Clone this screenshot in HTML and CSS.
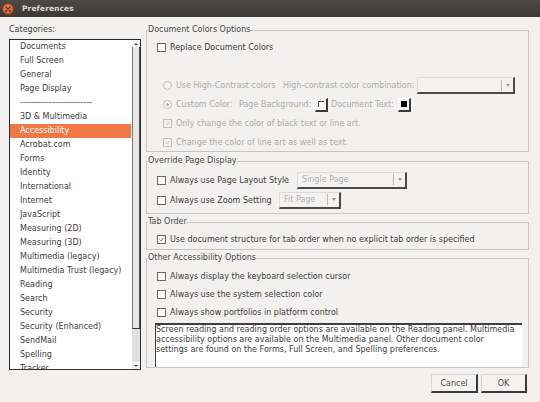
FILE: index.html
```html
<!DOCTYPE html>
<html>
<head>
<meta charset="utf-8">
<link rel="stylesheet" href="styles.css">
</head>
<body>
<div class="window">
  <div class="titlebar">
    <svg class="close" width="12" height="12" viewBox="0 0 12 12">
      <defs>
        <radialGradient id="cg" cx="0.45" cy="0.35" r="0.7">
          <stop offset="0" stop-color="#f7895a"/>
          <stop offset="1" stop-color="#d9481a"/>
        </radialGradient>
      </defs>
      <circle cx="6" cy="6" r="5.3" fill="url(#cg)" stroke="#b7421a" stroke-width="0.6"/>
      <path d="M4 4 L8 8 M8 4 L4 8" stroke="#3c3b37" stroke-width="1.4" stroke-linecap="round"/>
    </svg>
    <span class="title">Preferences</span>
  </div>

  <div class="main">
    <div class="cats">
      <div class="cats-label">Categories:</div>
      <div class="listbox">
        <ul class="items">
          <li>Documents</li>
          <li>Full Screen</li>
          <li>General</li>
          <li>Page Display</li>
          <li>-------------------------</li>
          <li>3D &amp; Multimedia</li>
          <li class="sel">Accessibility</li>
          <li>Acrobat.com</li>
          <li>Forms</li>
          <li>Identity</li>
          <li>International</li>
          <li>Internet</li>
          <li>JavaScript</li>
          <li>Measuring (2D)</li>
          <li>Measuring (3D)</li>
          <li>Multimedia (legacy)</li>
          <li>Multimedia Trust (legacy)</li>
          <li>Reading</li>
          <li>Search</li>
          <li>Security</li>
          <li>Security (Enhanced)</li>
          <li>SendMail</li>
          <li>Spelling</li>
          <li>Tracker</li>
        </ul>
        <div class="scrollbar">
          <div class="arrow"><span class="tri up"></span></div>
          <div class="thumb"></div>
          <div class="track"></div>
          <div class="arrow"><span class="tri down"></span></div>
        </div>
      </div>
    </div>

    <div class="panel">
      <fieldset class="group g1">
        <legend>Document Colors Options</legend>
        <div class="row h19">
          <span class="cb"></span><span>Replace Document Colors</span>
        </div>
        <div class="dis-block">
          <div class="row indent h19 dis">
            <span class="rb"></span><span class="w-hc">Use High-Contrast colors</span>
            <span class="w-hcc">High-contrast color combination:</span>
            <span class="combo w98"><span class="combo-text"></span><span class="sep"></span><span class="darr"></span></span>
          </div>
          <div class="row indent h19 dis">
            <span class="rb on"></span><span class="w-cc">Custom Color:</span>
            <span class="w-pb">Page Background:</span>
            <span class="swatch"><span class="chip white"></span></span>
            <span class="w-dt">Document Text:</span>
            <span class="swatch"><span class="chip black"></span></span>
          </div>
          <div class="row indent h19 dis">
            <span class="cb dis"><svg class="chk" viewBox="0 0 9 9"><path d="M2 4.5 L3.8 6.3 L7 2.5" fill="none" stroke="#b5b4b2" stroke-width="1"/></svg></span>
            <span>Only change the color of black text or line art.</span>
          </div>
          <div class="row indent h18 dis">
            <span class="cb dis"><svg class="chk" viewBox="0 0 9 9"><path d="M2 4.5 L3.8 6.3 L7 2.5" fill="none" stroke="#b5b4b2" stroke-width="1"/></svg></span>
            <span>Change the color of line art as well as text.</span>
          </div>
        </div>
      </fieldset>

      <fieldset class="group g2">
        <legend>Override Page Display</legend>
        <div class="row h20">
          <span class="cb"></span><span class="w-pls">Always use Page Layout Style</span>
          <span class="combo w110 dis"><span class="combo-text">Single Page</span><span class="sep"></span><span class="darr"></span></span>
        </div>
        <div class="row h20">
          <span class="cb"></span><span class="w-zs">Always use Zoom Setting</span>
          <span class="combo w62 dis"><span class="combo-text">Fit Page</span><span class="sep"></span><span class="darr"></span></span>
        </div>
      </fieldset>

      <fieldset class="group g3">
        <legend>Tab Order</legend>
        <div class="row h18">
          <span class="cb"><svg class="chk" viewBox="0 0 9 9"><path d="M2 4.5 L3.8 6.3 L7 2.5" fill="none" stroke="#555" stroke-width="1"/></svg></span>
          <span>Use document structure for tab order when no explicit tab order is specified</span>
        </div>
      </fieldset>

      <fieldset class="group g4">
        <legend>Other Accessibility Options</legend>
        <div class="row h18">
          <span class="cb"></span><span>Always display the keyboard selection cursor</span>
        </div>
        <div class="row h18">
          <span class="cb"></span><span>Always use the system selection color</span>
        </div>
        <div class="row h18">
          <span class="cb"></span><span>Always show portfolios in platform control</span>
        </div>
        <div class="note">Screen reading and reading order options are available on the Reading panel. Multimedia<br>accessibility options are available on the Multimedia panel. Other document color<br>settings are found on the Forms, Full Screen, and Spelling preferences.</div>
      </fieldset>
    </div>
  </div>

  <div class="buttons">
    <button class="btn cancel">Cancel</button>
    <button class="btn ok">OK</button>
  </div>
</div>
</body>
</html>
```

FILE: styles.css
```css
html, body {
  margin: 0;
  padding: 0;
}
body {
  background: #f2f1f0;
  font-family: "DejaVu Sans", "Liberation Sans", sans-serif;
  font-size: 8px;
  color: #3c3c3c;
}
.window {
  width: 540px;
  height: 402px;
  overflow: hidden;
  background: #f2f1f0;
}

/* title bar */
.titlebar {
  height: 17px;
  display: flex;
  align-items: center;
  padding-left: 2px;
  background: linear-gradient(#4a4944, #3a3935);
}
.close {
  display: block;
  flex: none;
}
.title {
  margin-left: 8px;
  font-weight: bold;
  font-size: 7.5px;
  color: #dfdbd2;
  letter-spacing: 0.1px;
}

/* main area */
.main {
  display: flex;
  gap: 5px;
  padding: 8px 11px 0 9px;
  height: 353px;
  box-sizing: border-box;
}
.cats {
  width: 132px;
  flex: none;
  display: flex;
  flex-direction: column;
}
.cats-label {
  height: 10px;
  line-height: 10px;
  margin-bottom: 4px;
}
.listbox {
  height: 331px;
  box-sizing: border-box;
  border: 1px solid #333;
  border-top-color: #2a2a2a;
  border-left-color: #2a2a2a;
  background: #fff;
  display: flex;
}
.items {
  flex: 1;
  list-style: none;
  margin: 0;
  padding: 0 1px 0 0;
  overflow: hidden;
}
.items li {
  height: 14px;
  line-height: 14px;
  padding-left: 10px;
  white-space: nowrap;
}
.items li.sel {
  background: #f07746;
  color: #fff;
}
.scrollbar {
  width: 8px;
  flex: none;
  display: flex;
  flex-direction: column;
  background: #f4f4f4;
}
.arrow {
  height: 7px;
  flex: none;
  display: flex;
  align-items: center;
  justify-content: center;
}
.tri {
  width: 0;
  height: 0;
  border-left: 2px solid transparent;
  border-right: 2px solid transparent;
}
.tri.up { border-bottom: 2px solid #444; }
.tri.down { border-top: 2px solid #444; }
.thumb {
  height: 282px;
  flex: none;
  box-sizing: border-box;
  background: #e8e7e5;
  border-left: 1px solid #7a7a7a;
  border-right: 1px solid #4a4a4a;
  border-bottom: 1px solid #333;
}
.track {
  flex: 1;
  background: #e2e1df;
}

/* right panel */
.panel {
  width: 383px;
  flex: none;
  display: flex;
  flex-direction: column;
}
.group {
  margin: 0;
  padding: 0;
  min-width: 0;
  border: 1px solid #c6c5c3;
}
.group legend {
  padding: 0;
  margin-left: 1px;
  height: 10px;
  line-height: 10px;
  color: #474747;
}
.g1 { padding-top: 3px; }
.g2 { margin-top: 4px; padding: 4px 0 3px; }
.g3 { margin-top: 3px; padding: 3px 0 1px; }
.g4 { margin-top: 3px; padding-top: 4px; }

.row {
  display: flex;
  align-items: center;
  padding-left: 10px;
  white-space: nowrap;
}
.row.indent { padding-left: 16px; }
.h18 { height: 18px; }
.h19 { height: 19px; }
.h20 { height: 20px; }
.dis-block { margin-top: 19px; }
.dis { color: #acaba9; }

.cb {
  width: 9px;
  height: 9px;
  flex: none;
  box-sizing: border-box;
  border: 1px solid #6a6a6a;
  background: #fbfbfb;
  margin-right: 4px;
  display: flex;
}
.cb.dis {
  border-color: #c2c1bf;
  background: #f4f3f2;
}
.chk {
  width: 7px;
  height: 7px;
  display: block;
}
.rb {
  width: 9px;
  height: 9px;
  flex: none;
  box-sizing: border-box;
  border: 1px solid #c2c1bf;
  border-radius: 50%;
  background: #f4f3f2;
  margin-right: 4px;
  display: flex;
  align-items: center;
  justify-content: center;
}
.rb.on::after {
  content: "";
  width: 3px;
  height: 3px;
  border-radius: 50%;
  background: #b5b4b2;
}

.w-hc { width: 107px; }
.w-hcc { width: 134px; }
.w-cc { width: 63px; }
.w-pb { width: 76px; }
.w-dt { width: 67px; margin-left: 3px; }
.w-pls { width: 127px; }
.w-zs { width: 109px; }

.combo {
  height: 17px;
  flex: none;
  box-sizing: border-box;
  display: flex;
  align-items: center;
  background: #f3f2f1;
  border-top: 1px solid #dddcda;
  border-left: 1px solid #dddcda;
  border-right: 2px solid #4a4a4a;
  border-bottom: 2px solid #4a4a4a;
}
.w98 { width: 98px; }
.w110 { width: 110px; }
.w62 { width: 62px; }
.combo-text {
  flex: 1;
  padding-left: 4px;
  color: #b0afad;
  overflow: hidden;
}
.sep {
  width: 1px;
  height: 11px;
  background: #b9b8b6;
  flex: none;
}
.darr {
  width: 11px;
  flex: none;
  display: flex;
  justify-content: center;
}
.darr::after {
  content: "";
  width: 0;
  height: 0;
  border-left: 2.5px solid transparent;
  border-right: 2.5px solid transparent;
  border-top: 3px solid #9a9997;
}

.swatch {
  width: 13px;
  height: 14px;
  flex: none;
  box-sizing: border-box;
  border-top: 1px solid #fff;
  border-left: 1px solid #fff;
  border-right: 2px solid #3a3a3a;
  border-bottom: 2px solid #3a3a3a;
  display: flex;
  align-items: center;
  justify-content: center;
}
.chip {
  width: 6px;
  height: 6px;
  box-sizing: border-box;
}
.chip.white {
  background: #fff;
  border-top: 1px solid #444;
  border-left: 1px solid #444;
}
.chip.black { background: #000; }

.note {
  margin: 2px 6px 0 8px;
  height: 44px;
  box-sizing: border-box;
  background: #fff;
  border-top: 2px solid #3f3f3f;
  border-left: 1px solid #3f3f3f;
  line-height: 10px;
  white-space: nowrap;
  overflow: hidden;
  color: #3c3c3c;
}

/* buttons */
.buttons {
  display: flex;
  justify-content: flex-end;
  gap: 3px;
  padding: 4px 13px 0 0;
}
.btn {
  height: 19px;
  box-sizing: border-box;
  margin: 0;
  padding: 0;
  font-family: "DejaVu Sans", "Liberation Sans", sans-serif;
  font-size: 8px;
  color: #4a4a4a;
  background: #f4f3f2;
  border-top: 1px solid #d6d5d3;
  border-left: 1px solid #d6d5d3;
  border-right: 2px solid #3a3a3a;
  border-bottom: 2px solid #3a3a3a;
}
.cancel { width: 47px; }
.ok { width: 46px; }
```
